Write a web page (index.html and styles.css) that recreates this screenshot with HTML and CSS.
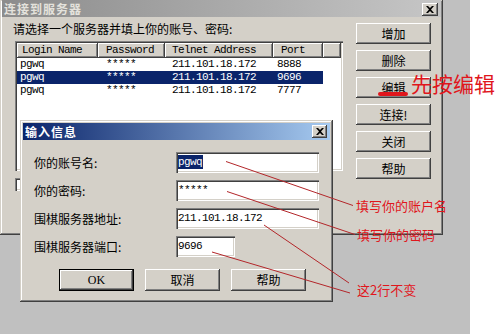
FILE: index.html
```html
<!DOCTYPE html>
<html lang="zh">
<head>
<meta charset="utf-8">
<title>连接到服务器</title>
<link rel="stylesheet" href="styles.css">
</head>
<body>
<div class="screen">
  <div class="desk">
    <section class="win main-win">
      <header class="titlebar inactive">
        <span class="title">连接到服务器</span>
        <span class="close"><svg width="8" height="7" viewBox="0 0 8 7"><path d="M0 0h2l2 2 2-2h2L5 3.5 8 7H6L4 5 2 7H0l3-3.5z" fill="#000"/></svg></span>
      </header>
      <div class="main-body">
        <div class="main-left">
          <p class="prompt">请选择一个服务器并填上你的账号、密码:</p>
          <div class="listview">
            <div class="lv-row lv-head">
              <span>Login Name</span><span>Password</span><span>Telnet Address</span><span>Port</span><span></span>
            </div>
            <div class="lv-row"><span>pgwq</span><span>*****</span><span>211.101.18.172</span><span>8888</span></div>
            <div class="lv-row selected"><span>pgwq</span><span>*****</span><span>211.101.18.172</span><span>9696</span></div>
            <div class="lv-row"><span>pgwq</span><span>*****</span><span>211.101.18.172</span><span>7777</span></div>
          </div>
          <div class="check-row"><span class="checkbox"></span></div>
        </div>
        <div class="main-btns">
          <button class="btn">增加</button>
          <button class="btn">删除</button>
          <button class="btn">编辑</button>
          <button class="btn">连接!</button>
          <button class="btn">关闭</button>
          <button class="btn">帮助</button>
        </div>
      </div>
    </section>
  </div>
  <div class="white"></div>

  <section class="win dialog">
    <header class="titlebar active">
      <span class="title">输入信息</span>
      <span class="close"><svg width="8" height="7" viewBox="0 0 8 7"><path d="M0 0h2l2 2 2-2h2L5 3.5 8 7H6L4 5 2 7H0l3-3.5z" fill="#000"/></svg></span>
    </header>
    <div class="form">
      <label>你的账号名:</label><div class="field"><span class="sel">pgwq</span></div>
      <label>你的密码:</label><div class="field">*****</div>
      <label>围棋服务器地址:</label><div class="field">211.101.18.172</div>
      <label>围棋服务器端口:</label><div class="field short">9696</div>
    </div>
    <div class="dlg-btns">
      <button class="btn default">OK</button>
      <button class="btn">取消</button>
      <button class="btn">帮助</button>
    </div>
  </section>

  <span class="mark-underline"></span>
  <span class="note big">先按编辑</span>
  <span class="note n1">填写你的账户名</span>
  <span class="note n2">填写你的密码</span>
  <span class="note n3">这2行不变</span>

  <svg class="lines" width="499" height="334" viewBox="0 0 499 334">
    <g stroke="#b3262a" stroke-width="1" fill="none">
      <line x1="226" y1="161.5" x2="353" y2="205.5"/>
      <line x1="227" y1="191.5" x2="355" y2="234.5"/>
      <line x1="264" y1="225" x2="349" y2="283"/>
      <line x1="212" y1="252" x2="350" y2="293"/>
    </g>
  </svg>
</div>
</body>
</html>
```

FILE: styles.css
```css
* { box-sizing: border-box; margin: 0; padding: 0; }

body {
  margin: 0;
  width: 499px;
  height: 334px;
  overflow: hidden;
  background: #fff;
  font-family: "Noto Sans CJK SC", "Noto Sans", sans-serif;
  font-size: 12px;
  color: #000;
}

.screen {
  position: relative;
  display: flex;
  width: 499px;
  height: 334px;
}

.desk {
  width: 470px;
  height: 334px;
  background: #c0c0c0;
}

.white { flex: 1; background: #fff; }

.win {
  background: #d4d0c8;
  box-shadow: inset -1px -1px #404040, inset 1px 1px #d4d0c8,
              inset -2px -2px #808080, inset 2px 2px #fff;
}

.main-win {
  width: 443px;
  height: 235px;
  padding: 0 2px 2px 2px;
  display: flex;
  flex-direction: column;
}

.titlebar {
  height: 17px;
  display: flex;
  align-items: flex-start;
  justify-content: space-between;
  padding: 0 3px 0 2px;
}

.titlebar .title {
  font-weight: bold;
  font-size: 12px;
  letter-spacing: 1px;
  line-height: 17px;
}

.titlebar.inactive {
  background: linear-gradient(to right, #8c8c8c, #c6c6c6);
  color: #e4e2dc;
}

.titlebar.active {
  background: linear-gradient(to right, #0a246a, #a6caf0);
  color: #fff;
}

.close {
  margin-top: 3px;
  width: 16px;
  height: 13px;
  background: #d4d0c8;
  display: flex;
  align-items: center;
  justify-content: center;
  box-shadow: inset -1px -1px #404040, inset 1px 1px #fff, inset -2px -2px #808080;
}

.main-body {
  flex: 1;
  display: flex;
  padding: 0 10px 0 11px;
  gap: 13px;
}

.main-left { width: 330px; }

.prompt {
  margin-top: 4px;
  height: 16px;
  line-height: 16px;
  margin-bottom: 4px;
  color: #000;
}

.listview {
  margin-left: 2px;
  width: 328px;
  height: 130px;
  background: #fff;
  padding: 2px;
  box-shadow: inset 1px 1px #808080, inset 2px 2px #404040,
              inset -1px -1px #fff, inset -2px -2px #d4d0c8;
}

.lv-row {
  display: grid;
  grid-template-columns: 81px 67px 108px 50px;
  width: 306px;
  height: 13px;
  font-family: "Liberation Mono", monospace;
  font-size: 11px;
  letter-spacing: -0.6px;
  line-height: 13px;
  white-space: nowrap;
}

.lv-row span { overflow: hidden; }
.lv-row span:nth-child(1) { padding-left: 3px; }
.lv-row span:nth-child(2) { padding-left: 8px; }
.lv-row span:nth-child(3) { padding-left: 7px; }
.lv-row span:nth-child(4) { padding-left: 4px; }

.lv-row.lv-head {
  width: auto;
  height: 15px;
  line-height: 15px;
  grid-template-columns: 81px 67px 108px 50px 1fr;
}

.lv-head span {
  background: #d4d0c8;
  box-shadow: inset -1px -1px #404040, inset 1px 1px #fff, inset -2px -2px #808080;
}
.lv-head span:nth-child(1) { padding-left: 5px; }
.lv-head span:nth-child(4) { padding-left: 8px; }

.lv-row.selected {
  background: #0a246a;
  color: #fff;
}

.check-row { margin: 7px 0 0 2px; height: 13px; }

.checkbox {
  display: block;
  width: 13px;
  height: 13px;
  background: #fff;
  box-shadow: inset 1px 1px #808080, inset 2px 2px #404040,
              inset -1px -1px #fff, inset -2px -2px #d4d0c8;
}

.main-btns {
  padding-top: 6px;
  display: flex;
  flex-direction: column;
  gap: 6px;
}

.btn {
  width: 75px;
  height: 21px;
  border: none;
  background: #d4d0c8;
  font-family: "Noto Sans CJK SC", sans-serif;
  font-size: 12px;
  color: #000;
  line-height: 21px;
  box-shadow: inset -1px -1px #404040, inset 1px 1px #fff,
              inset -2px -2px #808080, inset 2px 2px #d4d0c8;
}

.dialog {
  position: absolute;
  left: 20px;
  top: 120px;
  width: 313px;
  height: 182px;
  padding: 3px 3px 3px 3px;
}

.dialog .titlebar { height: 17px; padding: 0 3px 0 2px; }
.dialog .close { margin-top: 2px; width: 15px; }

.form {
  display: grid;
  grid-template-columns: 142px auto;
  justify-content: start;
  align-items: center;
  row-gap: 7px;
  padding: 12px 0 0 11px;
}

.form label { line-height: 21px; }

.field {
  width: 143px;
  height: 21px;
  background: #fff;
  padding: 0 2px;
  font-family: "Liberation Mono", monospace;
  font-size: 11px;
  letter-spacing: -0.6px;
  line-height: 21px;
  white-space: nowrap;
  box-shadow: inset 1px 1px #808080, inset 2px 2px #404040,
              inset -1px -1px #fff, inset -2px -2px #d4d0c8;
}

.field.short { width: 59px; }

.field .sel {
  background: #0a246a;
  color: #fff;
  padding: 1px 1px 1px 0;
}

.dlg-btns {
  display: flex;
  gap: 11px;
  padding: 12px 0 0 36px;
}

.dlg-btns .btn { height: 22px; line-height: 22px; }

.btn.default {
  font-family: "Liberation Serif", serif;
  box-shadow: inset 1px 1px #000, inset -1px -1px #000,
              inset -2px -2px #404040, inset 2px 2px #fff,
              inset -3px -3px #808080;
}

.note {
  position: absolute;
  color: #e0161c;
  font-size: 13px;
  line-height: 14px;
  white-space: nowrap;
}

.note.big { left: 411px; top: 72px; font-size: 21px; line-height: 22px; }
.note.n1 { left: 356px; top: 199px; }
.note.n2 { left: 357px; top: 228px; }
.note.n3 { left: 357px; top: 283px; }

.mark-underline {
  position: absolute;
  left: 378px;
  top: 92px;
  width: 30px;
  height: 4px;
  border-radius: 2px;
  background: #e0161c;
}

.lines {
  position: absolute;
  left: 0;
  top: 0;
  pointer-events: none;
}
```
